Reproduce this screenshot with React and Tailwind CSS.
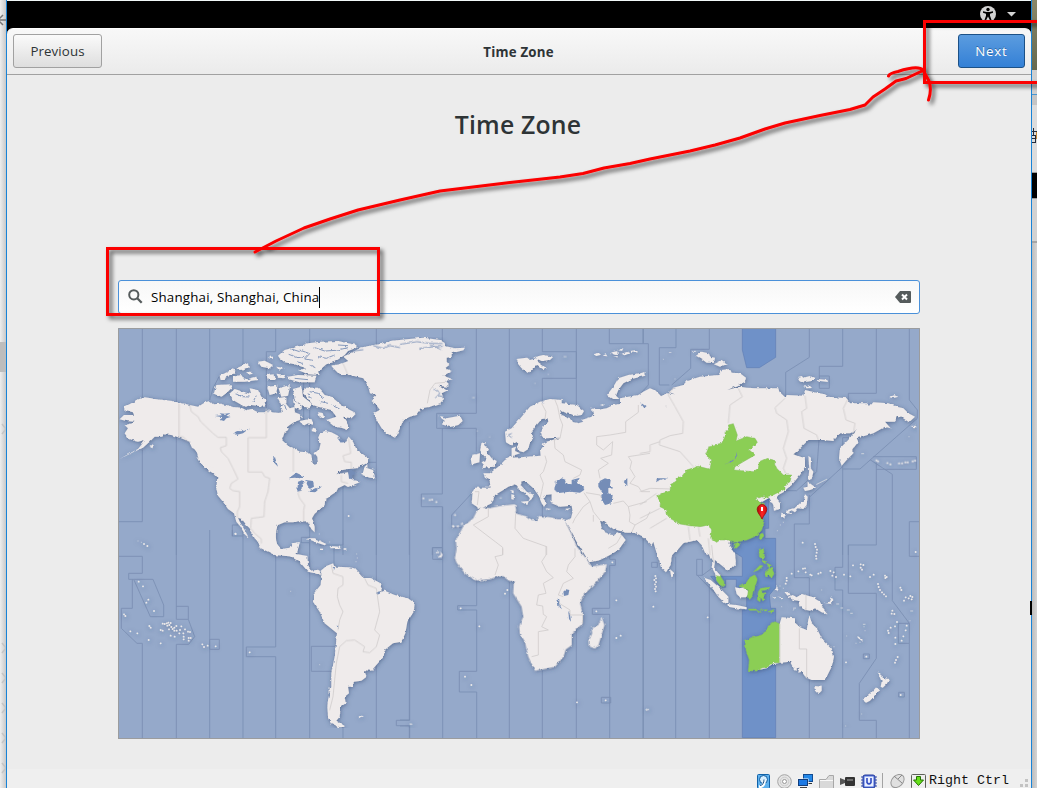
import React from "react";

/* Each region of the world is drawn at three units per pixel from its own origin. */
const A = "translate(118 325) scale(.333333)";
const B = "translate(380 325) scale(.333333)";
const C = "translate(640 325) scale(.333333)";
const D = "translate(118 530) scale(.333333)";
const E = "translate(400 480) scale(.333333)";
const F = "translate(640 480) scale(.333333)";

const zoneLines = [
  [A, "M73 10V590H0M175 10V690M275 10V225L285 190 303 155 375 122V10M473 10V80H445V250M575 10V690M557 60V290M675 470V690M775 10V690M343 600V633H375M343 600H360M700 430V412H775M650 250V280"],
  [D, "M3 79H73V130H32V148H105L137 225V260H97L48 150M43 148V235H10V295L57 340H73V625M175 0V268H211V229H175M211 268L230 320 212 343H175V625M275 0V358H304V328H275V625M343 0V19M375 0V625M473 78V351H385V380H473V625M575 22H550V38H575V625M655 349H580V424H645M675 0V45H605M675 590V625M648 55V105M775 0V625M875 0V571H835V587H875V625"],
  [B, "M88 290V690M187 10V60M187 310V507H124V545H187V690M289 10V265H170V310H289V380M388 10V310M487 10V80H589V160H487V230M589 10V240M688 10V56H805V180L773 215V240M789 10V56M280 500L215 570V608H245M157 690V668H187M487 500V580"],
  [C, "M10 10V55M108 10V68H58V180H88M208 10V73H152V130L95 180M508 10V97L437 142V215M608 10V124H538V190H568V153H538M709 10V205H625V235M808 10V225L832 255V280L660 432H608V338H640M608 425L510 515M690 404L757 448V690M700 395H829V433H709M709 412V660H625V690M608 432V690M838 590H808V690M508 510V597H463V690M537 345L530 440 505 465 470 497H430"],
  [E, "M28 380V720H0M0 738H28V775M128 80V775M128 203H98V238H128M230 300V377H173V390H230V574H178V636H230V775M328 300V775M427 572V775M529 450V775M629 215V238H646V256H629V385H577V403H629V775M604 652h28v17h-28zM729 160V775"],
  [F, "M463 225V293H508V405M508 600V775M608 0V262H585V330H608V775M625 195V340H709V535L658 610V721H709V775M757 225V362L808 430V490H775V430H808M808 225V229H838M808 490V775M10 160V775M107 230V775M208 320V775M35 247h17v15h-17zM170 238H187V286H170ZM187 286L215 265M172 286L225 340M670 522h18v14h-18zM776 637h17v14h-17z"],
];

const land = [
  [A, "M5 283L18 270 48 270 45 262 20 255 18 246 40 235 55 225 80 217 100 220 110 222 160 228 200 236 215 240 240 245 262 232 275 228 285 238 310 236 325 240 345 246 370 248 385 256 400 252 420 262 440 262 450 252 462 262 480 264 495 262 490 245 502 234 515 250 530 246 530 262 545 268 552 275 545 285 530 290 515 300 505 308 515 312 500 322 492 345 510 362 525 368 545 380 570 382 580 390 583 410 590 420 600 415 598 395 590 385 604 372 608 355 600 340 606 325 620 318 640 322 660 332 668 345 680 355 692 335 705 350 715 372 735 388 752 400 752 412 740 418 715 430 690 432 670 436 655 448 675 445 690 442 694 452 705 465 720 468 725 472 690 486 680 480 660 490 655 500 640 510 630 518 622 522 620 540 610 550 590 566 582 580 590 605 590 622 580 612 570 592 560 592 545 588 525 592 500 592 480 600 475 615 472 640 480 665 495 672 515 668 522 655 545 652 538 680 530 695 470 690 420 665 425 655 410 640 395 610 385 600 372 582 360 578 365 590 380 615 392 638 380 628 368 605 355 590 348 565 330 552 315 530 300 512 295 490 298 460 285 445 270 435 245 410 235 380 215 350 190 340 160 330 135 328 130 335 110 335 95 350 75 368 45 382 5 402 30 388 60 372 70 360 80 345 60 350 50 348 30 340 20 325 30 310 20 300 45 295 50 290 25 288Z"],
  [A, "M480 92L500 75 550 62 570 55 610 50 660 48 715 60 715 68 690 78 680 90 650 110 625 118 600 140 605 150 570 148 540 135 565 130 530 118 500 112 485 100ZM510 155L540 150 595 152 590 172 545 172 510 162ZM560 188L600 188 612 200 620 210 640 215 670 240 690 252 715 265 700 280 675 275 690 300 690 315 670 308 650 305 625 285 655 275 640 255 600 245 585 240 565 215 555 205ZM525 192L550 185 555 215 580 235 575 250 560 245 530 225ZM333 208L350 192 375 200 400 208 395 190 420 195 430 215 445 225 440 245 400 240 380 245 345 225ZM295 180L345 178 340 190 325 205 310 215 288 205ZM345 155L370 150 380 165 415 155 418 165 380 170 345 170ZM305 152L345 133 355 145 325 153 320 165 308 165ZM355 130L390 115 392 128 365 135ZM445 150L470 148 472 165 450 165ZM420 110L440 107 465 120 455 130 430 125ZM448 185L478 182 475 205 455 210ZM482 190L515 180 515 190 510 212 490 215ZM480 220L505 215 505 235 490 240ZM545 288L580 282 588 300 570 295 555 303ZM475 125L500 130 485 137ZM476 146L500 150 505 160 480 158ZM525 225L548 240 548 255 530 248ZM455 95h10v6h-10zM382 142l18-2 4 6-16 4zM600 262l14 2 4 12-12 2zM585 308l12 4-4 10-12-4zM685 465L700 475 710 470 702 480 690 478ZM733 450L740 425 748 418 748 430 765 435 772 460 755 458ZM214 350L225 360 235 375 222 368ZM235 395L260 415 285 430 305 447 275 437 245 412ZM95 365L108 360 103 370Z"],
  [D, "M395 0L410 20 425 45 470 70 485 73 515 78 545 95 570 125 590 130 606 135 610 125 600 119 580 122 570 105 568 78 535 72 545 37 520 42 515 55 490 58 475 40 472 0ZM605 125L625 108 648 99 652 110 690 112 712 115 735 140 760 145 785 158 792 180 780 190 800 182 830 195 870 205 890 220 887 245 868 275 862 310 850 335 825 340 800 360 797 380 775 405 760 422 738 420 746 440 730 452 708 455 705 470 690 470 693 490 680 500 683 520 668 530 665 560 655 572 684 590 665 592 640 580 630 560 628 530 630 510 640 470 640 430 650 380 657 310 620 280 605 245 585 215 588 190 608 165 610 140ZM563 28L575 25 590 25 625 42 620 46 598 38 578 30ZM635 48L665 50 668 56 640 58ZM603 56h12v4h-12zM677 55h8v4h-8zM722 560l8-3 8 2 -14 5zM632 475h4v14h-4z"],
  [B, "M-146 122L-120 118 -95 108 -110 95 -70 75 -60 68 -20 60 0 58 30 48 80 43 130 38 180 45 195 55 190 62 225 70 255 68 250 76 215 85 215 95 200 98 200 110 208 120 195 130 215 138 190 152 218 163 195 168 205 175 205 185 175 182 195 195 205 195 185 205 192 222 180 235 150 245 125 250 110 270 90 275 70 285 60 310 50 330 45 338 20 325 5 310 -10 285 -20 265 0 255 -15 235 -25 225 -10 210 -30 205 -35 185 -50 160 -90 150 -120 150 -140 130ZM175 272L190 275 200 280 240 272 248 288 235 300 210 306 185 298 195 288ZM410 102L440 98 450 105 470 100 475 112 500 130 490 135 468 120 445 145 425 130 415 118ZM460 97L490 90 520 95 510 105 485 108ZM681 210L700 185 715 160 745 150 797 142 795 152 755 162 730 175 715 195 708 212 718 222 700 222ZM305 352L318 352 312 365 325 370 320 380 335 400 350 408 345 425 320 427 303 432 312 420 305 412 318 405 312 392 300 375ZM278 390L300 385 298 412 275 418 272 400ZM395 495l6 2v8l-6-2zM394 508l9 2-3 15-6-3zM422 530l24-2-4 12zM497 550l17 2-10 3zM556 553l16-4-10 7z"],
  [B, "M640 88l15-4 8 5-14 4zM668 92l10-4 4 6zM690 83l20-4 8 5-12 6zM712 76l18-6-4 8zM725 86l16-5 8 4-15 6zM745 79l24-4 5 7-20 1zM700 96l12-3 2 4zM660 240l10-3 0 6z"],
  [B, "M375 320L378 352 395 362 410 350 418 378 430 382 445 372 450 350 460 340 455 320 470 300 485 282 503 280 505 290 485 310 480 330 495 340 540 338 500 350 485 358 490 365 480 372 482 392 440 395 400 398 405 390 420 385 405 378 408 365 395 370 395 395 375 405 355 425 330 445 310 445 315 455 328 462 332 488 285 488 278 500 275 535 295 548 305 550 335 535 345 510 370 495 385 485 405 478 415 490 440 508 450 520 445 530 455 522 462 510 440 500 422 480 425 468 440 472 460 490 475 510 485 535 492 545 500 535 490 520 495 510 515 508 515 535 540 545 575 542 578 560 573 580 555 587 565 605 590 650 615 690 628 712 660 705 690 690 715 675 737 645 725 630 712 622 700 630 680 628 665 605 660 587 672 590 700 612 740 623 785 625 810 650 860 650 860 235 840 210 825 195 810 195 785 220 792 240 775 232 750 240 740 228 735 235 700 240 680 250 650 255 635 247 640 268 635 275 605 285 610 290 595 295 575 290 570 280 545 270 540 255 560 265 590 272 605 270 612 258 590 240 545 235 545 225 510 222 480 230 450 245 425 275 395 310Z"],
  [E, "M243 82L268 85 300 78 345 73 348 90 345 100 380 110 395 120 410 122 415 108 450 112 475 118 498 118 497 128 515 165 530 200 550 225 568 250 575 260 620 253 615 275 590 305 550 345 540 370 548 400 548 430 515 460 515 495 497 508 490 530 465 560 430 567 405 572 385 530 375 485 360 460 358 440 370 410 365 380 340 340 342 305 325 300 310 288 290 290 270 297 228 301 195 280 170 248 165 235 170 205 168 180 190 140 220 115 230 95ZM605 413L613 435 595 495 585 505 570 500 568 480 577 460 575 445 595 435ZM156 135l8 4-6 3zM168 138l10-2-4 7zM183 130l7-3-5 10zM107 218l9-4 0 6zM120 214l8 10-4 8-11 0 10-8z"],
  [C, "M-5 210L10 200 30 190 42 195 45 235 38 262 20 265 35 272 50 262 55 240 75 255 80 245 62 235 60 215 80 205 105 208 85 200 100 188 130 180 140 168 180 155 235 150 245 135 270 132 275 143 300 145 318 158 315 170 290 182 262 195 300 185 320 188 350 190 385 190 415 190 418 200 437 218 440 210 490 212 495 195 530 203 555 208 565 215 620 220 630 235 680 235 690 243 700 232 745 235 770 245 790 250 805 265 825 275 807 292 790 280 770 275 765 290 735 290 752 310 735 305 700 325 665 335 650 340 655 350 640 370 640 385 620 405 605 422 597 400 600 370 625 345 640 325 650 315 630 325 600 325 580 348 550 345 505 345 475 375 460 388 478 395 495 400 495 425 480 450 455 480 440 492 430 502 415 510 408 520 420 535 420 552 402 557 400 540 388 518 350 540 350 630 290 650 270 643 265 655 285 685 288 715 265 737 250 725 235 713 225 705 222 730 240 750 245 780 230 765 225 745 215 727 218 705 205 687 195 683 185 660 170 645 150 650 130 655 95 695 92 720 78 742 65 730 50 685 40 650 35 660 10 635 -20 620 -60 560 -60 220Z"],
  [C, "M505 393L513 398 512 430 520 440 515 462 505 465 508 430ZM503 470L528 488 510 495 495 498 490 488 503 485ZM495 508L503 515 500 540 490 552 475 550 465 562 455 556 438 565 440 556 465 548 480 535 492 530ZM424 563L438 568 432 582 424 575ZM443 563l14-3-5 7zM168 92L185 80 205 85 208 95 225 98 222 113 200 113 185 102ZM222 118L243 107 260 118 240 125ZM472 157L485 153 490 158 510 153 525 160 515 168 490 172 478 168ZM532 162l30 3 2 6-28-4zM490 185l18-4 8 8-16 1zM748 216l15-5 12 4-14 4zM812 303l14-1 5 5-12-1zM-8 150L12 142 17 150-5 155ZM155 80l10-3 4 3zM85 82l8-1 2 2z"],
  [F, "M425 412L465 415 465 428 480 442 500 450 508 405 515 430 530 445 545 475 575 505 582 530 575 560 560 590 555 600 515 600 497 592 485 575 475 578 478 562 465 572 450 545 420 548 400 553 380 565 350 570 400 500 419 432ZM523 618L545 620 545 632 535 642 525 632ZM712 573L722 585 735 595 748 597 740 612 728 623 722 620 725 605ZM712 618L720 630 705 645 690 662 678 668 668 660 690 643ZM90 268L102 278 102 288 94 292ZM192 293L212 300 240 325 265 350 265 368 255 370 235 350 210 315ZM262 373L290 375 320 382 320 388 290 385 265 380ZM285 322L300 325 315 320 328 340 318 352 300 352 290 342ZM433 338L448 335 452 345 440 347ZM445 352L458 345 470 352 485 342 515 350 540 365 550 385 562 400 545 397 525 385 510 392 490 388 478 375 475 362 460 360ZM552 368L570 365 575 352 580 360 572 372ZM410 318l5 8-3 8-4-6zM412 350l20 2-6 3zM653 468l16 12-4 2-12-9zM397 352l10 0-2 4zM458 388l8-6 0 5z"],
];

const green = [
  [C, "M50 515L68 505 90 498 92 478 110 470 108 460 125 455 140 435 175 424 210 433 215 405 197 390 208 362 245 355 255 335 255 320 268 315 265 300 280 296 292 330 288 348 320 335 345 340 352 352 340 365 328 375 345 390 310 410 285 425 282 435 340 440 355 430 358 410 380 400 400 405 410 430 430 450 455 450 450 470 435 480 435 492 395 512 370 520 375 510 345 523 358 530 375 537 355 545 360 560 372 590 365 615 350 632 320 645 280 652 262 645 240 645 230 652 212 640 215 615 207 600 180 605 150 602 120 597 90 580 82 570 80 555 60 545 62 530ZM360 628L368 625 372 632 362 644 358 640ZM282 657l14-5 3 8-10 10-7-5z"],
  [F, "M419 432L405 425 390 432 375 455 365 465 330 475 316 485 318 510 328 540 325 572 350 573 360 565 385 560 400 548 419 548ZM228 287L242 290 252 305 252 320 240 315 230 302ZM298 320L318 310 330 292 345 285 352 298 345 320 340 345 330 358 322 355 325 330 310 322ZM358 207L370 205 373 225 368 238 358 230ZM368 240l10 5-4 6zM380 250l14 6-6 8zM360 256l9 2-14 12-14 5zM374 280L395 262 402 282 395 293 385 285 378 288ZM355 335L362 325 388 322 386 328 365 332 366 340 378 338 372 345 375 360 368 362 362 350 360 365 352 360ZM325 387l20 0 10 4-26 0zM360 390l22-1-3 4zM384 395l20-7-8 8zM362 397l-8-3 10 2z"],
];

const inlandWater = [
  [A, "M290 273L312 271 305 265 320 266 338 264 325 272 338 276 325 280 318 288 305 284 315 277ZM345 324L358 318 372 319 365 311 378 318 395 310 375 325 355 330ZM462 395L472 400 480 425 470 415ZM512 460L535 443 560 455 545 460 530 458ZM538 500L540 470 552 466 560 472 552 480 550 497ZM562 465L585 468 588 485 575 492 568 480ZM570 500L595 490 612 484 592 502ZM655 335l12 8 18 5-16 6zM690 435l20-3-5 6 12 8-14 5 0 12-10-2z"],
  [B, "M523 490L530 470 545 460 558 465 555 475 575 478 575 465 600 458 590 470 617 492 600 503 570 500 530 505ZM655 470L675 460 692 465 690 480 700 490 685 492 685 505 698 510 695 535 675 540 662 520 668 505 655 485ZM728 468l14-8 0 22-6-6z"],
  [E, "M490 335L498 328 508 330 505 345 492 348ZM472 355L478 358 478 372 486 388 475 378ZM505 393l5 8 3 24-6-8z"],
  [C, "M48 472L52 460 86 460 60 464ZM252 418L270 412 288 395 290 380 292 395 275 412ZM0 232L20 245 12 248Z"],
  [D, "M645 110l6 4-2 8-5-4zM774 188l10-4 6 5-12 5zM656 286l7 5-4 3z"],
];

const inlets = [
  [A, "M512 88L540 98 560 94M545 75L575 86 560 102 585 106M590 68L620 78 655 76 690 68M600 95L625 100 650 90M575 120L592 128M535 110L555 115M530 160L570 164M575 200L600 205 615 218M600 228L630 235M640 240L665 252M350 205L372 215 395 216M415 212L405 230M570 205L580 220M450 240V262M500 240L505 255M520 72L545 80M660 60L690 62"],
  [B, "M-20 62L10 70 30 62 60 68M60 58L110 50 150 55 188 56M118 70L155 66 188 64M-80 78L-50 74M150 60L185 74M160 190L180 205 165 220M175 212L190 215M395 325L385 330 395 338M525 470L530 478M485 225L490 235"],
];

const borders = [
  [A, "M183 236V335H195L210 350M215 240L220 260 240 275 248 290 285 325 300 337H325V362L307 368 310 380 330 400 345 430 360 462 340 475 335 490 345 497 365 500V545L358 560V578M445 250V338H390V441H432L440 455 455 460 450 500 440 530 438 575 400 580 398 610 410 625 430 642V655M526 370V440M557 590V555L560 540 545 520 540 505 550 495M692 340L698 385 675 392 680 410 700 412V430M670 450V470L690 475M675 115L690 150"],
  [D, "M640 105L645 130 675 140V165L660 175 658 200 665 225 675 245 665 270 660 300M740 145L750 165 775 175 785 245 770 300 785 315 775 350 755 368 735 365 740 350 710 330 685 332 665 350 655 400 650 450 645 500 635 540"],
  [B, "M142 235L150 195 165 175 195 172M485 235L498 260 495 282M525 225L533 245 540 280 548 300 540 340 523 345 525 370 550 390 555 410 605 435 600 450 580 460M495 392L500 410 490 440 480 450 490 475 485 500 480 520M775 240V262L737 290V322L690 330 650 335V360L670 375 698 350 695 390 662 400 685 415 655 435 660 460M810 385L745 395 755 410 750 430 765 455 750 475 775 485 785 500 810 500M618 503L660 510 665 520M612 503L630 530 610 545 585 580 578 595M630 530L640 560 660 585M700 535L730 528 745 545 800 530M745 545L750 570 748 590 765 600 755 622M765 600L800 580 810 560M285 500L297 500 292 540M325 550V575L280 600 368 667V690M407 565L405 610 430 640 500 665V690M640 570L640 590"],
  [E, "M308 205V225L285 230 295 255 285 285M438 198V225L425 245 440 275 460 293 430 310 438 340 415 345 410 375 428 378 430 403 440 410 425 440 445 450 415 455V525L395 530M525 205L525 230 505 255 500 275 520 295 490 310 475 345 490 350M510 405H548V430M478 370L510 390 510 405M665 165L650 190 625 205"],
  [C, "M100 188L85 210 105 245 130 290 128 325 90 332 60 345 58 360 120 380 160 425M0 385L30 380 30 360 60 350M0 500L30 490 90 492M0 540L50 505M0 580L40 560 60 550M30 610L80 580M295 190L307 215 270 240 265 295M435 220L405 248 410 265 440 285 445 320 430 370 440 400 430 430 437 445M495 212L500 250 485 260 492 310 530 330 535 345M622 225L610 250 618 285 645 295 640 325M145 605L150 645M175 605L180 635M205 640L210 690"],
  [F, "M419 432V548M478 445V507H500V595M498 345V392M215 195L220 245"],
];

const islands = [
  [A, "M692 573h.1M88 663h.1M78 657h.1M352 626h.1"],
  [D, "M62 155h.1M75 169h.1M91 209h.1M85 218h.1M108 243h.1M18 253h.1M22 258h.1M37 304h.1M58 310h.1M94 288h.1M98 293h.1M92 330h.1M128 340h.1M128 300h.1M134 302h.1M134 281h.1M140 282h.1M146 280h.1M151 278h.1M158 279h.1M148 287h.1M154 285h.1M160 291h.1M153 298h.1M164 297h.1M169 293h.1M175 288h.1M169 302h.1M176 302h.1M186 300h.1M190 289h.1M201 298h.1M184 310h.1M196 310h.1M210 305h.1M216 306h.1M197 320h.1M197 328h.1M212 324h.1M218 324h.1M212 332h.1M158 317h.1M170 320h.1M253 343h.1M258 351h.1M269 347h.1M293 349h.1M395 367h.1M353 12h.1"],
  [B, "M130 520h.1M149 525h.1M156 524h.1M169 531h.1M225 570h.1M220 604h.1"],
  [E, "M322 330h.1M315 341h.1M182 385h.1M238 439h.1M195 590h.1M214 615h.1M531 667h.1M617 661h.1M589 394h.1M649 361h.1M649 474h.1M662 467h.1M637 247h.1M760 380h.1M740 689h.1M766 288h.1M768 295h.1M763 300h.1M768 306h.1M765 313h.1M768 320h.1M765 327h.1M767 334h.1"],
  [C, "M709 406h.1M714 409h.1M742 414h.1M751 418h.1M777 415h.1M786 415h.1M796 412h.1M803 412h.1M818 409h.1M825 407h.1"],
  [F, "M488 188h.1M525 192h.1M527 201h.1M531 209h.1M530 218h.1M528 228h.1M529 236h.1M827 216h.1M639 256h.1M662 253h.1M670 255h.1M662 263h.1M666 269h.1M690 291h.1M701 284h.1M735 287h.1M740 291h.1M736 294h.1M714 312h.1M716 321h.1M720 330h.1M726 337h.1M732 343h.1M738 349h.1M781 323h.1M784 330h.1M792 362h.1M797 352h.1M806 355h.1M811 348h.1M817 351h.1M815 358h.1M757 392h.1M763 402h.1M755 401h.1M771 426h.1M765 439h.1M752 443h.1M744 452h.1M746 459h.1M766 473h.1M766 492h.1M800 437h.1M797 451h.1M790 469h.1M785 482h.1M773 531h.1M768 540h.1M765 548h.1M782 645h.1M679 530h.1M618 547h.1M203 412h.1M612 284h.1M631 289h.1M588 291h.1M577 287h.1M581 277h.1M571 273h.1M542 278h.1M535 281h.1M515 286h.1M511 284h.1M497 277h.1M495 265h.1M489 266h.1M475 274h.1M455 281h.1M440 294h.1M440 302h.1M437 311h.1"],
];

const islets = [
  [A, "M60 648h.1M70 652h.1"],
  [D, "M518 184h.1M605 404h.1M876 582h4M716 72h.1M718 84h.1M714 95h.1M604 12h.1M635 36h.1"],
  [B, "M278 218h5M292 318h.1M329 336h.1M465 175h.1M505 148h.1M552 95h6M360 519h4"],
  [E, "M31 733h5M738 689h8"],
  [C, "M430 592h.1M421 600h.1M412 617h.1M530 478L560 463M665 386h6M807 335h.1M70 103h.1M105 162h.1"],
  [F, "M590 372h6M603 384h5M622 390h6M632 400h5M670 433h5M672 440h.1M675 452h.1M620 468h.1M648 490h.1M660 487h.1M812 393h6M810 422h.1M545 330h.1M582 500h.1M20 688h6M665 702h.1M617 738h.1M420 318h.1M430 325h.1M425 380h.1"],
];

function Shapes({ items }) {
  return items.map(([t, d], i) => <path key={i} transform={t} d={d} />);
}

function WorldMap() {
  return (
    <svg className="block h-full w-full" viewBox="118 328 802 411">
      <defs>
        <filter id="coast" x="0" y="0" width="100%" height="100%" colorInterpolationFilters="sRGB">
          <feTurbulence type="fractalNoise" baseFrequency=".25" numOctaves="2" seed="4" result="n" />
          <feDisplacementMap in="SourceGraphic" in2="n" scale="3" xChannelSelector="R" yChannelSelector="G" />
        </filter>
        <filter id="halo" x="0" y="0" width="100%" height="100%">
          <feDropShadow dx="0.5" dy="1" stdDeviation="2" floodColor="#34496f" floodOpacity=".6" />
        </filter>
        <linearGradient id="pin" x1="0" x2="1">
          <stop offset="0" stopColor="#a80808" />
          <stop offset=".5" stopColor="#ff2525" />
          <stop offset="1" stopColor="#d00b0b" />
        </linearGradient>
      </defs>
      <path d="M118 328H920V739H118Z" fill="#95a9ca" />
      <g fill="none" stroke="#6f83a8" strokeWidth="2.5" opacity=".7"><Shapes items={zoneLines} /></g>
      <g fill="#6f91c8" stroke="#617fb5" strokeWidth="2">
        <path transform={C} d="M307 10H407V97L358 128H320L307 75Z" />
        <path transform={F} d="M278 180V213L307 232V289H212L225 305 245 322H257V298H289V325H320V390H307V773H407V385H392L388 345 407 322V175H375V145H386V48L340 50 350 120Z" />
      </g>
      <g filter="url(#halo)">
        <g filter="url(#coast)">
          <g fill="#efebeb"><Shapes items={land} /></g>
          <g fill="#8bce55" stroke="#84bd5c" strokeWidth="1.5"><Shapes items={green} /></g>
          <g fill="#748db7"><Shapes items={inlandWater} /></g>
          <g fill="none" stroke="#8498bb" strokeWidth="3"><Shapes items={inlets} /></g>
        </g>
        <g fill="none" stroke="#ece9e9" strokeWidth="5.5" strokeLinecap="round"><Shapes items={islands} /></g>
        <g fill="none" stroke="#c9d0dc" strokeWidth="3" strokeLinecap="round"><Shapes items={islets} /></g>
      </g>
      <g fill="none" stroke="#cfcccc" strokeWidth="2.4" strokeLinejoin="round"><Shapes items={borders} /></g>
      <path d="M762 519C760.6 515.3 757.2 513.100 757.2 509.300A4.8 4.8 0 0 1 766.8 509.300C766.8 513.100 763.4 515.3 762 519Z" fill="url(#pin)" stroke="#9a0808" strokeWidth=".8" />
      <path d="M761 507h2v4h-2z" fill="#fff" />
      <path d="M118.5 739V328.5H919.5V738.5H118" fill="none" stroke="#9b9c9e" />
    </svg>
  );
}

function StatusBar() {
  return (
    <div className="flex h-[19px] items-start bg-[#efefef] pl-[749px]">
      <svg className="mt-[4px] h-[15px] w-[172px] shrink-0" viewBox="756 773 172 15">
        <rect x="757.5" y="774.5" width="12" height="14" rx="1" fill="#5eb1ee" stroke="#1162a8" />
        <circle cx="763.5" cy="779.5" r="4" fill="#d8efff" stroke="#0d5a9e" />
        <path d="M759 787Q765 786 764 780" fill="none" stroke="#fff" strokeWidth="3" />
        <path d="M760 785.5Q764 785 764 779.5" fill="none" stroke="#154f85" />
        <circle cx="784.5" cy="781.5" r="6.8" fill="#e4e4e4" stroke="#a5a5a5" />
        <circle cx="784.5" cy="781.5" r="4.3" fill="none" stroke="#cdcdcd" />
        <circle cx="784.5" cy="781.5" r="2" fill="#fff" stroke="#999" />
        <rect x="803.5" y="774.5" width="9" height="7" fill="#2388e8" stroke="#124b91" />
        <path d="M808 783.5H812" stroke="#333" />
        <rect x="797.5" y="778.5" width="11" height="8" fill="#f4f8ff" />
        <rect x="798.5" y="779.5" width="9" height="6" fill="#1c79e4" stroke="#123e7b" />
        <path d="M800 787.5H807" stroke="#444" />
        <path d="M819.5 788V779.5H826L829 775.5H833.5V788" fill="#d9d9d9" stroke="#a8a8a8" />
        <path d="M820 780.5H833" stroke="#f8f8f8" />
        <rect x="845" y="777" width="10" height="9" rx="1" fill="#333" />
        <path d="M840 778L845 780V783L840 785Z" fill="#555" />
        <path d="M847 780H853" stroke="#aaa" />
        <path d="M861 777H877M861 780H877M861 783H877M861 786H877" stroke="#354cb0" />
        <rect x="863" y="775" width="12" height="13" rx="2" fill="#4a6ad8" stroke="#263d9c" />
        <rect x="864.5" y="776.5" width="9" height="10" fill="#eaf0ff" />
        <path d="M867 778V782.5Q869 785.5 871 782.5V778" fill="none" stroke="#304bc2" strokeWidth="1.6" />
        <path d="M882.5 773V788" stroke="#a3a3a3" />
        <ellipse cx="897.5" cy="781" rx="7.5" ry="5.5" transform="rotate(-45 897.5 781)" fill="#e0e0e0" stroke="#999" />
        <path d="M894 776L902 783M898 779L902 775" stroke="#888" fill="none" />
        <rect x="911.5" y="774.5" width="14" height="14" rx="1" fill="#eee" stroke="#5e615a" />
        <path d="M916.5 776.5H920.5V780H923.5L918.5 785.5 913.5 780H916.5Z" fill="#65e019" stroke="#277204" />
      </svg>
      <span className="ml-px mt-[4px] h-[15px] w-[82px] whitespace-pre font-['Liberation_Mono',monospace] text-[13.33px] leading-[15px] text-[#111]">Right Ctrl</span>
      <svg className="ml-[8px] mt-[9px] h-[10px] w-[11px]" viewBox="0 0 11 10">
        <path d="M6 1h3v3h-3zM1 6h3v3h-3zM6 6h3v3h-3z" fill="#c3c3c3" />
      </svg>
    </div>
  );
}

function Annotations() {
  return (
    <svg className="pointer-events-none absolute inset-0 h-full w-full" viewBox="0 0 1037 788">
      <defs>
        <filter id="ink" filterUnits="userSpaceOnUse" x="0" y="0" width="1050" height="788">
          <feDropShadow dx="3" dy="3" stdDeviation="2.2" floodColor="#000" floodOpacity=".65" />
        </filter>
      </defs>
      <g fill="none" stroke="#fb0000" strokeWidth="3" filter="url(#ink)">
        <rect x="107.5" y="248.5" width="271" height="66" />
        <rect x="924.5" y="21.5" width="130" height="61" />
        <path strokeLinecap="round" strokeLinejoin="round" d="M255 252L276 241 304 228 330 219 358 210 400 200 440 191 510 182.5 560 177 583 173.5 604 168 630 163.500 650 159 690 151 715 145 740 138 765 129 785 123 820 115.500 850 109.500 865 105 873 97 885 89 896 81 906 78.500 922 71M888.500 76Q890 73 898 71.500Q918 65 923 70L929 81Q932 90 928.500 100" />
      </g>
    </svg>
  );
}

function LeftEdge() {
  return (
    <div className="w-[6px] shrink-0 bg-gradient-to-r from-[#eeeeee] to-[#c9c9c9]">
      <svg className="h-full w-full" viewBox="0 0 6 788">
        <path d="M-4 20H6M3 15L-2 20 3 25" stroke="#777" strokeWidth="1.5" fill="none" />
        <path d="M0 342H6V372H0Z" fill="#bdbdbd" />
        <path d="M2 424l4 5-4 5M2 643l4 5-4 5M2 673l4 5-4 5M2 703l4 5-4 5M2 733l4 5-4 5M2 763l4 5-4 5" fill="none" stroke="#c5c5c5" strokeWidth="1.5" />
      </svg>
    </div>
  );
}

function RightEdge() {
  return (
    <div className="flex w-[5px] shrink-0 flex-col overflow-hidden bg-gradient-to-r from-[#bdbdbd] to-[#d4d4d4]">
      <div className="h-[70px] shrink-0 bg-gradient-to-b from-[#8a8768] to-[#66694f]" />
      <div className="h-[25px] shrink-0 border-b border-[#4b96cf] bg-[#cfcfcf]" />
      <div className="h-[10px] shrink-0 bg-[#c5c5c5]" />
      <div className="h-[67px] shrink-0 bg-[#dcdcdc] pt-[22px]">
        <svg className="block h-[18px] w-[5px]" viewBox="0 0 5 18">
          <path d="M0 4.500H5M1.500 1V8M0 8.500H5M3.500 8V15M0 11.500H5M0 15.500L4 15.500" stroke="#222c3c" fill="none" />
          <path d="M4.500 5V12" stroke="#c88a3a" fill="none" />
        </svg>
      </div>
      <div className="h-[27px] shrink-0 border-y border-[#999] bg-black" />
      <div className="h-[44px] shrink-0 border-b-2 border-[#a5a5a5] bg-[#d2d2d2]" />
    </div>
  );
}

export default function App() {
  return (
    <div className="relative flex h-[788px] w-[1037px] overflow-hidden font-['Open_Sans','Noto_Sans',sans-serif] text-[#2e3436]">
      <LeftEdge />
      <main className="flex w-[1026px] shrink-0 flex-col border-x border-[#1883d7] bg-[#ececec]">
        <div className="bg-black">
          <div className="h-px bg-[#f1f7f7]" />
          <div className="flex h-[27px] items-center justify-end gap-[10px] pr-[15px]">
            <svg className="mr-px mt-[-1px] h-4 w-4" viewBox="0 0 16 16">
              <circle cx="8" cy="8" r="8" fill="#d3d3d3" />
              <circle cx="8" cy="3.500" r="1.700" fill="#000" />
              <path d="M3 5.300L6.500 6H9.500L13 5.300V6.800L10 7.700V9.800L11.500 14H9.800L8 10.500 6.200 14H4.500L6 9.800V7.700L3 6.800Z" fill="#000" />
            </svg>
            <svg className="h-[5px] w-[9px]" viewBox="0 0 9 5"><path d="M0 0H9L4.500 4.500Z" fill="#d3d3d3" /></svg>
          </div>
          <header className="flex h-[47px] items-center justify-between rounded-t-[6px] border-b border-t border-b-[#a1a1a1] border-t-white bg-gradient-to-b from-[#f8f8f8] to-[#ebebeb] px-[6px]">
            <button className="-mt-px h-[34px] w-[89px] rounded-[3px] border border-[#a1a1a1] bg-gradient-to-b from-[#fafafa] to-[#dedede] pt-[2px] text-[13.3px] tracking-[0.1px]">Previous</button>
            <h1 className="mr-[23px] mt-[2px] text-[13.3px] font-bold tracking-[0.2px]">Time Zone</h1>
            <button className="-mt-px h-[34px] w-[67px] rounded-[3px] border border-[#1c5187] bg-gradient-to-b from-[#5b9cdf] to-[#3380d6] pt-[2px] text-[13.3px] tracking-[0.8px] text-white [text-shadow:0_-1px_#2b68a5]">Next</button>
          </header>
        </div>
        <section className="flex flex-1 flex-col px-[111px]">
          <h2 className="mr-[2px] mt-[31px] h-[36px] text-center text-[24.8px] font-semibold leading-[36px] tracking-[0.2px]">Time Zone</h2>
          <div className="mt-[138px] flex h-[34px] w-[802px] items-center rounded-[3px] border border-[#4a90d9] bg-gradient-to-b from-[#f7f7f7] to-white px-[9px]">
            <svg className="mt-[-1px] h-[15px] w-[15px]" viewBox="0 0 15 15">
              <circle cx="5.800" cy="5.800" r="4.600" fill="none" stroke="#555b5c" strokeWidth="2" />
              <path d="M9 9L13.700 13.700" stroke="#555b5c" strokeWidth="2.300" />
            </svg>
            <span className="ml-[8px] mt-[2px] text-[13.3px] tracking-[0.2px] text-black">Shanghai, Shanghai, China</span>
            <span className="h-[21px] w-px bg-black" />
            <svg className="ml-auto mr-[-1px] mt-[-1px] h-[12px] w-[16px]" viewBox="0 0 16 12">
              <path d="M5 0H15Q16 0 16 1V11Q16 12 15 12H5L0 6Z" fill="#555b5c" />
              <path d="M7 3.500L12 8.500M12 3.500L7 8.500" stroke="white" strokeWidth="2" />
            </svg>
          </div>
          <div className="mt-[14px] h-[411px] w-[802px]"><WorldMap /></div>
        </section>
        <StatusBar />
      </main>
      <RightEdge />
      <div className="absolute left-[1030px] top-[601px] h-[14px] w-[2px] bg-black" />
      <Annotations />
    </div>
  );
}
